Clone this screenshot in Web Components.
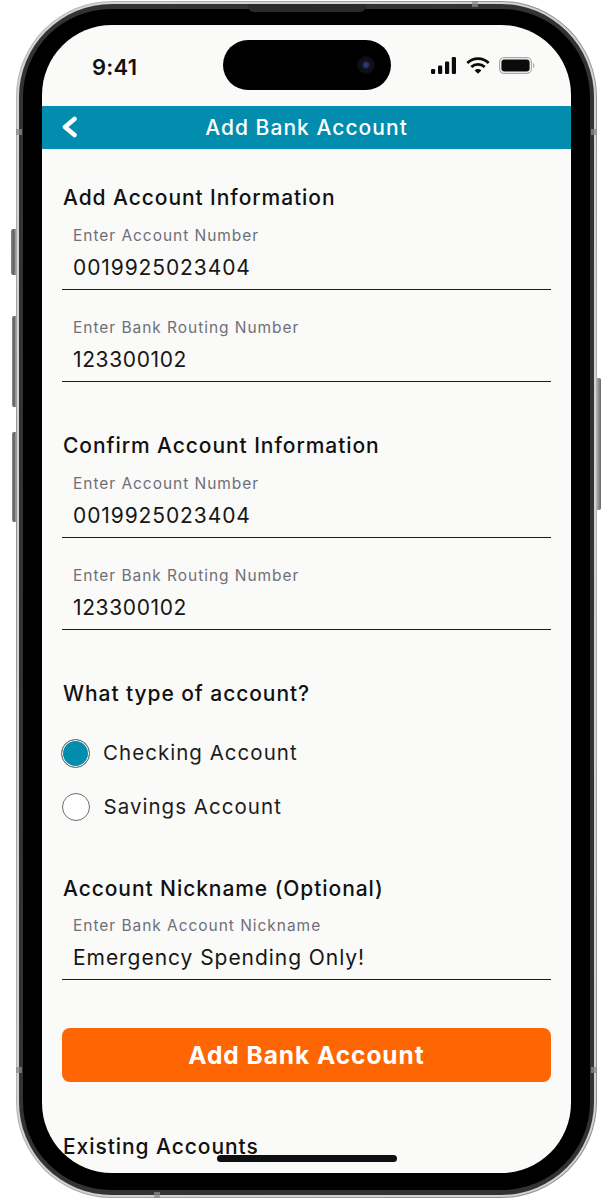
<!DOCTYPE html>
<html lang="en"><head><meta charset="utf-8"><title>Add Bank Account</title>
<style>
html,body{margin:0;padding:0;background:#fff}
body{font-family:Inter,"Liberation Sans",sans-serif;color:#111;width:611px;height:1200px;overflow:hidden}
</style></head><body>
<phone-frame>
  <status-bar></status-bar>
  <app-header>Add Bank Account</app-header>
  <form-body>
    <form-section heading="Add Account Information">
      <text-field label="Enter Account Number" value="0019925023404" spacing="0.9"></text-field>
      <text-field label="Enter Bank Routing Number" value="123300102"></text-field>
    </form-section>
    <form-section heading="Confirm Account Information">
      <text-field label="Enter Account Number" value="0019925023404" spacing="0.9"></text-field>
      <text-field label="Enter Bank Routing Number" value="123300102"></text-field>
    </form-section>
    <form-section heading="What type of account?">
      <radio-group>
        <radio-option checked>Checking Account</radio-option>
        <radio-option>Savings Account</radio-option>
      </radio-group>
    </form-section>
    <form-section heading="Account Nickname (Optional)" tight>
      <text-field label="Enter Bank Account Nickname" value="Emergency Spending Only!" spacing="0.95"></text-field>
    </form-section>
    <primary-button>Add Bank Account</primary-button>
    <form-section heading="Existing Accounts" last></form-section>
  </form-body>
</phone-frame>
<script>
function def(name, css, html){
  customElements.define(name, class extends HTMLElement{
    connectedCallback(){
      if(this.shadowRoot) return;
      const r=this.attachShadow({mode:'open'});
      r.innerHTML='<style>'+css+'</style>'+(typeof html==='function'?html(this):html);
    }
  });
}
const esc=s=>(s||'').replace(/&/g,'&amp;').replace(/</g,'&lt;');

def('phone-frame',`
:host{display:block;box-sizing:border-box;position:relative;width:581px;height:1197px;margin:1px 0 0 16px;border-radius:96px;
  background:linear-gradient(135deg,#bdbdbd,#8f8f8f 30%,#b5b5b5 60%,#8a8a8a);padding:1px}
.btn{position:absolute;background:linear-gradient(90deg,#8c8c8c,#5d5d5d 55%,#a8a8a8);border-radius:2px 0 0 2px;width:5px}
.btn.r{border-radius:0 2px 2px 0;background:linear-gradient(90deg,#a8a8a8,#666)}
.band{position:absolute;background:#8a8a8a;opacity:.75}
.rim{box-sizing:border-box;height:100%;border-radius:95px;background:#d2d2d2;padding:2px}
.metal{box-sizing:border-box;height:100%;border-radius:93px;background:#343232;padding:5px 4px 5px 4px}
.bezel{box-sizing:border-box;height:100%;border-radius:88px;background:#000;padding:16px 19px 17px 19px}
.screen{position:relative;box-sizing:border-box;height:100%;border-radius:70px;background:#fafaf8;overflow:hidden}
.pill{position:absolute;left:181px;top:15px;width:168px;height:50px;border-radius:25px;background:#000}
.cam{position:absolute;left:134px;top:16px;width:18px;height:18px;border-radius:50%;background:radial-gradient(circle,#2a3a70 0 2px,#12131f 4px,#0b0b12 9px)}
.home{position:absolute;left:175px;top:1130px;width:180px;height:7px;border-radius:4px;background:#0c1012}
.speaker{position:absolute;left:232px;top:3px;width:118px;height:8px;background:#2b2a2a;border-radius:0 0 6px 6px}
`,`
<div class="btn" style="left:-5px;top:228px;height:46px"></div>
<div class="btn" style="left:-4px;top:315px;height:91px;width:4px"></div>
<div class="btn" style="left:-4px;top:431px;height:90px;width:4px"></div>
<div class="btn r" style="right:-4px;top:377px;height:132px;width:4px"></div>
<div class="speaker"></div>
<div class="rim"><div class="metal"><div class="bezel"><div class="screen">
  <slot></slot>
  <div class="pill"><div class="cam"></div></div>
  <div class="home"></div>
</div></div></div></div>
<div class="band" style="left:0;top:128px;width:6px;height:6px"></div>
<div class="band" style="right:0;top:128px;width:6px;height:6px"></div>
<div class="band" style="left:0;top:1066px;width:6px;height:6px"></div>
<div class="band" style="right:0;top:1066px;width:6px;height:6px"></div>
<div class="band" style="left:456px;top:0;width:6px;height:6px"></div>
<div class="band" style="left:138px;bottom:0;width:6px;height:6px"></div>
`);

def('status-bar',`
:host{display:flex;align-items:center;justify-content:space-between;box-sizing:border-box;height:81px;padding:0 36px 0 50px}
.time{font:600 22px/1 Inter,sans-serif;color:#111;margin-top:3px;letter-spacing:.2px}
.icons{display:flex;align-items:center;gap:9.5px;margin-top:0}
svg{display:block}
`,`
<span class="time">9:41</span>
<span class="icons">
<svg width="25" height="17" viewBox="0 0 25 17"><rect x="0" y="12" width="4.2" height="5" rx="1.2" fill="#0b0b0b"/><rect x="7" y="8.5" width="4.2" height="8.5" rx="1.2" fill="#0b0b0b"/><rect x="14" y="4.5" width="4.2" height="12.5" rx="1.2" fill="#0b0b0b"/><rect x="20.8" y="0" width="4.2" height="17" rx="1.2" fill="#0b0b0b"/></svg>
<svg width="24" height="17" viewBox="0 0 24 17" fill="none" stroke="#0b0b0b" stroke-width="2.8"><path d="M1.3 6A15.5 15.5 0 0 1 22.7 6"/><path d="M5.3 10A9.8 9.8 0 0 1 18.7 10"/><path d="M12 16.8L8.6 13.4A4.8 4.8 0 0 1 15.4 13.4Z" fill="#0b0b0b" stroke="none"/></svg>
<svg width="36" height="17" viewBox="0 0 36 17"><rect x=".6" y=".6" width="31.8" height="15.8" rx="4.6" fill="none" stroke="#a9a9a9" stroke-width="1.2"/><rect x="2.4" y="2.4" width="28.2" height="12.2" rx="3" fill="#0b0b0b"/><path d="M34 6v5a2.6 2.6 0 0 0 1.4-2.5A2.6 2.6 0 0 0 34 6z" fill="#a9a9a9"/></svg>
</span>`);

def('app-header',`
:host{display:flex;align-items:center;justify-content:center;position:relative;height:43px;background:#028DAF;color:#fff;font:500 21px/1 Inter,sans-serif;letter-spacing:1.04px}
svg{position:absolute;left:18.5px;top:10px}
`,`<svg width="18" height="22" viewBox="0 0 18 22" fill="none" stroke="#fff" stroke-width="4.6" stroke-linecap="round" stroke-linejoin="round"><path d="M13.5 3L4 11l9.5 8"/></svg><slot></slot>`);

def('form-body',`:host{display:block;padding:34px 20px 0 20px}`,`<slot></slot>`);

def('form-section',`
:host{display:block;margin-bottom:49px}
:host([tight]){margin-bottom:48px}
:host([last]){margin-bottom:0}
h2{margin:0;font:500 21px/30px Inter,sans-serif;color:#111;letter-spacing:.93px;padding-left:1px}
:host([tight]) .body{margin-top:-1px}
.body{display:flex;flex-direction:column;gap:15px}
`,h=>`<h2>${esc(h.getAttribute('heading'))}</h2><div class="body"><slot></slot></div>`);

def('text-field',`
:host{display:block;box-sizing:border-box;height:77px;padding:13px 0 0 11px;border-bottom:1.3px solid #1a1a1a}
.l{font:400 15.5px/20px Inter,sans-serif;color:#6f6f78;letter-spacing:.96px}
.v{margin-top:6px;font:400 21px/32px Inter,sans-serif;color:#161616;letter-spacing:.62px}
`,h=>{const s=h.getAttribute('spacing');return `<div class="l">${esc(h.getAttribute('label'))}</div><div class="v"${s?` style="letter-spacing:${s}px"`:''}>${esc(h.getAttribute('value'))}</div>`});

def('radio-group',`:host{display:flex;flex-direction:column;gap:26px;margin-top:30px;margin-bottom:4px}`,`<slot></slot>`);

def('radio-option',`
:host{display:flex;align-items:center;gap:14px;height:28px;color:#1c1c1c;font:400 20.5px/28px Inter,sans-serif;letter-spacing:1.03px}
.c{box-sizing:border-box;width:28px;height:28px;margin-left:-.5px;border-radius:50%;border:1.3px solid #6e6e6e;background:#fff}
:host([checked]) .c{background:#028DAF;box-shadow:inset 0 0 0 1px #fff;width:29px;height:29px;margin-left:-1px;margin-right:-1px}
`,`<span class="c"></span><span><slot></slot></span>`);

def('primary-button',`
:host{display:flex;align-items:center;justify-content:center;height:54px;margin-bottom:50px;background:#FE6604;color:#fff;border-radius:8px;font:700 24.5px/1 Inter,sans-serif;letter-spacing:.95px}
`,`<slot></slot>`);
</script>
</body></html>
